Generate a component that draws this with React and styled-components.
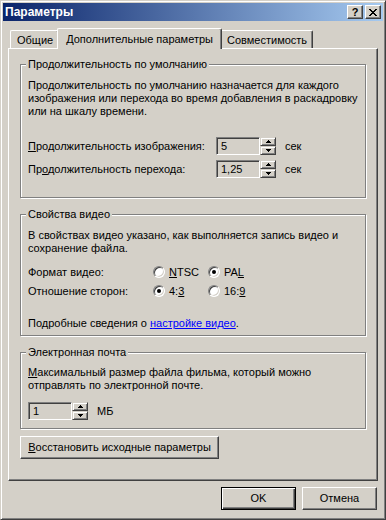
import React from 'react';
import styled, { createGlobalStyle } from 'styled-components';

const GlobalStyle = createGlobalStyle`
  html, body {
    margin: 0;
    padding: 0;
    background: #D4D0C8;
  }
  body {
    font-family: "Liberation Sans", Arial, sans-serif;
    font-size: 11px;
    line-height: 13px;
    color: #000;
  }
`;

const Dialog = styled.div`
  width: 386px;
  height: 520px;
  box-sizing: border-box;
  background: #D4D0C8;
  border: 1px solid;
  border-color: #D4D0C8 #404040 #404040 #D4D0C8;
  box-shadow: inset 1px 1px #fff, inset -1px -1px #808080;
  padding: 2px;
  display: flex;
  flex-direction: column;
`;

const TitleBar = styled.div`
  flex: none;
  height: 18px;
  display: flex;
  align-items: center;
  justify-content: space-between;
  padding: 0 2px;
  background: linear-gradient(to right, #0A246A, #A6CAF0);
`;

const TitleText = styled.span`
  color: #fff;
  font-weight: bold;
  font-size: 12px;
`;

const CaptionButtons = styled.div`
  display: flex;
  gap: 2px;
`;

const CaptionButton = styled.div`
  width: 16px;
  height: 14px;
  box-sizing: border-box;
  background: #D4D0C8;
  border: 1px solid;
  border-color: #fff #404040 #404040 #fff;
  box-shadow: inset -1px -1px #808080;
  display: flex;
  align-items: center;
  justify-content: center;
  font-weight: bold;
  font-size: 11px;
  line-height: 1;
`;

const Body = styled.div`
  flex: 1;
  display: flex;
  flex-direction: column;
  padding: 7px 5px 0;
`;

const TabStrip = styled.div`
  position: relative;
  z-index: 1;
  display: flex;
  align-items: flex-end;
  height: 20px;
  padding-left: 2px;
`;

const Tab = styled.div`
  position: relative;
  z-index: ${({ $active }) => ($active ? 2 : 1)};
  box-sizing: border-box;
  height: ${({ $active }) => ($active ? 21 : 18)}px;
  margin: ${({ $active }) => ($active ? '0 -2px -1px' : '0')};
  padding: ${({ $active }) => ($active ? '0 8px' : '2px 5px 0 6px')};
  background: #D4D0C8;
  border: 1px solid;
  border-bottom: none;
  border-color: #fff #404040 #404040 #fff;
  border-radius: 2px 2px 0 0;
  box-shadow: inset -1px 0 #808080;
  display: flex;
  align-items: center;
  white-space: nowrap;
`;

const Panel = styled.div`
  position: relative;
  z-index: 0;
  height: 433px;
  box-sizing: border-box;
  border: 1px solid;
  border-color: #fff #404040 #404040 #fff;
  box-shadow: inset -1px -1px #808080;
  padding: 15px 11px 0;
  display: flex;
  flex-direction: column;
`;

const Group = styled.section`
  border: 1px solid #808080;
  box-shadow: inset 1px 1px #fff, 1px 1px #fff;
  padding: 0 7px ${({ $pb }) => $pb}px;
  margin-top: ${({ $mt }) => $mt || 0}px;
  display: flex;
  flex-direction: column;
`;

const GroupTitle = styled.div`
  align-self: flex-start;
  margin: -7px 0 0 -2px;
  padding: 0 2px;
  background: #D4D0C8;
`;

const Text = styled.div`
  margin-top: ${({ $mt }) => $mt}px;
  white-space: nowrap;
`;

const Row = styled.div`
  display: flex;
  align-items: center;
  height: ${({ $h }) => $h || 18}px;
  margin-top: ${({ $mt }) => $mt}px;
`;

const RowLabel = styled.span`
  flex: none;
  width: ${({ $w }) => $w}px;
`;

const Unit = styled.span`
  margin-left: 9px;
`;

const SpinWrap = styled.div`
  display: flex;
  height: 18px;
`;

const TextBox = styled.div`
  width: 44px;
  box-sizing: border-box;
  border: 1px solid;
  border-color: #808080 #fff #fff #808080;
  box-shadow: inset 1px 1px #404040, inset -1px -1px #D4D0C8;
  background: #D4D0C8;
  padding: 0 4px;
  display: flex;
  align-items: center;
`;

const SpinButtons = styled.div`
  width: 16px;
  display: flex;
  flex-direction: column;
`;

const SpinHalf = styled.div`
  flex: 1;
  box-sizing: border-box;
  border: 1px solid;
  border-color: #D4D0C8 #404040 #404040 #D4D0C8;
  box-shadow: inset 1px 1px #fff, inset -1px -1px #808080;
  display: flex;
  align-items: center;
  justify-content: center;
`;

const RadioOption = styled.label`
  flex: none;
  width: ${({ $w }) => $w || 55}px;
  display: flex;
  align-items: center;
`;

const RadioDot = styled.span`
  position: relative;
  width: 12px;
  height: 12px;
  box-sizing: border-box;
  border-radius: 50%;
  border: 1px solid;
  border-color: #808080 #fff #fff #808080;
  box-shadow: inset 1px 1px #404040, inset -1px -1px #D4D0C8;
  background: #fff;
  margin-right: 4px;

  &::after {
    content: '';
    display: ${({ $checked }) => ($checked ? 'block' : 'none')};
    position: absolute;
    left: 3px;
    top: 3px;
    width: 4px;
    height: 4px;
    border-radius: 50%;
    background: #000;
  }
`;

const Link = styled.a`
  color: #0000FF;
  text-decoration: underline;
`;

const Button = styled.button`
  font: inherit;
  color: #000;
  width: ${({ $w }) => $w || 75}px;
  height: 23px;
  box-sizing: border-box;
  padding: 0;
  background: #D4D0C8;
  border: 1px solid;
  border-color: ${({ $default }) => ($default ? '#000' : '#fff #404040 #404040 #fff')};
  box-shadow: ${({ $default }) =>
    $default
      ? 'inset 1px 1px #fff, inset -1px -1px #404040, inset -2px -2px #808080'
      : 'inset -1px -1px #808080'};
`;

const Footer = styled.div`
  display: flex;
  justify-content: flex-end;
  gap: 6px;
  padding: 6px 1px 0 0;
`;

const Arrow = ({ up }) => (
  <svg width="5" height="3" viewBox="0 0 5 3" shapeRendering="crispEdges">
    {up ? (
      <path d="M2 0h1v1h1v1h1v1H0V2h1V1h1z" fill="#000" />
    ) : (
      <path d="M0 0h5v1H4v1H3v1H2V2H1V1H0z" fill="#000" />
    )}
  </svg>
);

const Spin = ({ value }) => (
  <SpinWrap>
    <TextBox>{value}</TextBox>
    <SpinButtons>
      <SpinHalf><Arrow up /></SpinHalf>
      <SpinHalf><Arrow /></SpinHalf>
    </SpinButtons>
  </SpinWrap>
);

const Radio = ({ checked, children, w }) => (
  <RadioOption $w={w}>
    <RadioDot $checked={checked} />
    <span>{children}</span>
  </RadioOption>
);

export default function App() {
  return (
    <>
      <GlobalStyle />
      <Dialog>
        <TitleBar>
          <TitleText>Параметры</TitleText>
          <CaptionButtons>
            <CaptionButton>?</CaptionButton>
            <CaptionButton>
              <svg width="8" height="7" viewBox="0 0 8 7" shapeRendering="crispEdges">
                <path d="M0 0h2v1h1v1h2V1h1V0h2v1H7v1H6v1H5v1h1v1h1v1h1v1H6V6H5V5H3v1H2v1H0V6h1V5h1V4h1V3H2V2H1V1H0z" fill="#000" />
              </svg>
            </CaptionButton>
          </CaptionButtons>
        </TitleBar>
        <Body>
          <TabStrip>
            <Tab>Общие</Tab>
            <Tab $active>Дополнительные параметры</Tab>
            <Tab>Совместимость</Tab>
          </TabStrip>
          <Panel>
            <Group $pb={19}>
              <GroupTitle>Продолжительность по умолчанию</GroupTitle>
              <Text $mt={8}>
                Продолжительность по умолчанию назначается для каждого<br />
                изображения или перехода во время добавления в раскадровку<br />
                или на шкалу времени.
              </Text>
              <Row $mt={19}>
                <RowLabel $w={188}><u>П</u>родолжительность изображения:</RowLabel>
                <Spin value="5" />
                <Unit>сек</Unit>
              </Row>
              <Row $mt={5}>
                <RowLabel $w={188}>Пр<u>о</u>должительность перехода:</RowLabel>
                <Spin value="1,25" />
                <Unit>сек</Unit>
              </Row>
            </Group>

            <Group $mt={16} $pb={5}>
              <GroupTitle>Свойства видео</GroupTitle>
              <Text $mt={8}>
                В свойствах видео указано, как выполняется запись видео и<br />
                сохранение файла.
              </Text>
              <Row $mt={9} $h={16}>
                <RowLabel $w={125}>Формат видео:</RowLabel>
                <Radio><u>N</u>TSC</Radio>
                <Radio checked>PA<u>L</u></Radio>
              </Row>
              <Row $mt={3} $h={16}>
                <RowLabel $w={125}>Отношение сторон:</RowLabel>
                <Radio checked>4:<u>3</u></Radio>
                <Radio>16:<u>9</u></Radio>
              </Row>
              <Text $mt={18}>
                Подробные сведения о <Link>настройке видео</Link>.
              </Text>
            </Group>

            <Group $mt={16} $pb={8}>
              <GroupTitle>Электронная почта</GroupTitle>
              <Text $mt={7}>
                <u>М</u>аксимальный размер файла фильма, который можно<br />
                отправлять по электронной почте.
              </Text>
              <Row $mt={10}>
                <Spin value="1" />
                <Unit>МБ</Unit>
              </Row>
            </Group>

            <Row $mt={7} $h={23}>
              <Button $w={199}><u>В</u>осстановить исходные параметры</Button>
            </Row>
          </Panel>
          <Footer>
            <Button $default>OK</Button>
            <Button>Отмена</Button>
          </Footer>
        </Body>
      </Dialog>
    </>
  );
}
